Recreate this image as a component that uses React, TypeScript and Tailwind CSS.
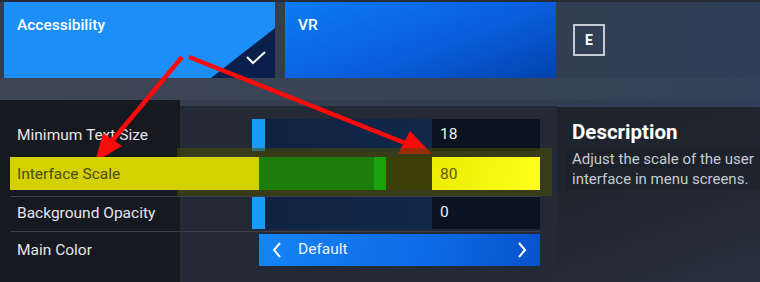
import React from "react";

const font = { fontFamily: "Roboto, 'Liberation Sans', sans-serif" };

function Slider({ value }: { value: string }) {
  return (
    <div className="flex h-full">
      <div className="relative w-[173px] h-full bg-[linear-gradient(90deg,#0f2242,#11284a)]">
        <div className="absolute left-[-7px] top-0 w-[13px] h-full bg-[#1a9bf6]" />
      </div>
      <div className="w-[108px] h-full bg-[#0b1221] flex items-center pl-[8px] text-[15.5px] text-[#eef0f2]">
        {value}
      </div>
    </div>
  );
}

function Row({ label, children }: { label: string; children: React.ReactNode }) {
  return (
    <div className="flex h-[32px] pl-[10px]">
      <div className="w-[249px] flex items-center pl-[7px] pt-[2px] text-[15.5px] text-[#e4e6ea]">{label}</div>
      {children}
    </div>
  );
}

function Arrows() {
  return (
    <svg className="absolute inset-0 pointer-events-none" width="760" height="282" viewBox="0 0 760 282">
      <line x1="182" y1="57" x2="112" y2="141" stroke="#ff0a0a" strokeWidth="4.5" />
      <polygon points="95,162 122,146 103,133" fill="#ff0a0a" />
      <line x1="189" y1="57" x2="405" y2="143" stroke="#ff0a0a" strokeWidth="4.5" />
      <polygon points="432,154 398,154 410,131" fill="#ff0a0a" />
    </svg>
  );
}

export default function App() {
  return (
    <div
      className="relative w-[760px] h-[282px] overflow-hidden bg-[linear-gradient(90deg,#363e4b,#333e52_70%,#30405a)]"
      style={font}
    >
      {/* top tabs */}
      <div className="h-[78px] flex pt-[2px] pl-[4px] border-t-2 border-[#252c37]">
        <div className="relative w-[271px] h-[76px] -mt-[2px] bg-[#1b8ef8] overflow-hidden">
          <div className="pt-[12px] pl-[13px] text-[15.5px] font-medium text-white">Accessibility</div>
          <svg className="absolute right-0 bottom-0" width="64" height="50" viewBox="0 0 64 50">
            <polygon points="64,0 64,50 0,50" fill="#0a1f4c" />
            <polyline points="36,29 42,35 54,24" fill="none" stroke="#ffffff" strokeWidth="2" />
          </svg>
        </div>
        <div className="ml-[10px] w-[271px] h-[76px] -mt-[2px] bg-[linear-gradient(160deg,#0c7bf4,#0a5ede_55%,#0243ad)]">
          <div className="pt-[12px] pl-[13px] text-[15.5px] font-medium text-white">VR</div>
        </div>
        <div className="ml-[17px] mt-[20px] w-[32px] h-[32px] border-2 border-[#c6cbd3] flex items-center justify-center text-[14px] font-bold text-white">
          E
        </div>
      </div>
      <div className="h-[22px] bg-[linear-gradient(90deg,#3c4553,#374358_75%,#35425b)]" />

      {/* bottom */}
      <div className="flex h-[182px]">
        <div className="w-[557px] pt-[19px] bg-[linear-gradient(to_right,#16191f_180px,transparent_180px),linear-gradient(to_bottom,transparent_6px,#232a36_6px)]">
          <Row label="Minimum Text Size">
            <Slider value="18" />
          </Row>

          <div className="relative z-10 -mt-[3px] h-[48px] pt-[9px] pl-[10px] bg-[linear-gradient(to_right,transparent_177px,rgba(72,74,0,0.55)_177px,rgba(72,74,0,0.55)_552px,transparent_552px)]">
            <div className="flex h-[33px]">
              <div className="w-[249px] flex items-center pl-[7px] pt-[2px] text-[15.5px] text-[#4d4c12] bg-[#d5d100]">
                Interface Scale
              </div>
              <div className="flex w-[173px] h-full">
                <div className="w-[115px] bg-[#1d7d0b]" />
                <div className="w-[12px] bg-[#16a40a]" />
                <div className="flex-1 bg-[#3b3f07]" />
              </div>
              <div className="w-[108px] flex items-center pl-[8px] pt-[2px] text-[15.5px] text-[#5b5a10] bg-[linear-gradient(100deg,#eceb00,#ffff1c)]">
                80
              </div>
            </div>
          </div>

          <div className="ml-[10px] w-[530px] h-px bg-[#3a4250]" />
          <Row label="Background Opacity">
            <Slider value="0" />
          </Row>
          <div className="mt-[2px] ml-[10px] w-[530px] h-px bg-[#3a4250]" />

          <div className="flex h-[32px] pl-[10px] mt-[2px]">
            <div className="w-[249px] flex items-center pl-[7px] pt-[2px] text-[15.5px] text-[#e4e6ea]">Main Color</div>
            <div className="w-[281px] h-full flex items-center bg-[linear-gradient(100deg,#1484f6,#0d6ae6_60%,#0752cc)] text-white">
              <svg width="12" height="18" viewBox="0 0 12 18" className="ml-[12px]">
                <polyline points="9,2 3,9 9,16" fill="none" stroke="#ffffff" strokeWidth="2" />
              </svg>
              <span className="ml-[15px] text-[15.5px] text-[#eef2f8]">Default</span>
              <svg width="12" height="18" viewBox="0 0 12 18" className="ml-auto mr-[12px]">
                <polyline points="3,2 9,9 3,16" fill="none" stroke="#ffffff" strokeWidth="2" />
              </svg>
            </div>
          </div>
        </div>

        <div className="flex-1 mt-[7px] pl-[15px] pt-[12px] bg-[linear-gradient(160deg,#1d222b,#222833_60%,#2a3240)]">
          <div className="text-[20.5px] font-bold text-white leading-[26px]">Description</div>
          <div className="mt-[3px] -ml-[6px] pl-[6px] py-[1px] bg-[#1b2028]/60 text-[15px] leading-[20px] text-[#c7cbd1] whitespace-nowrap">
            Adjust the scale of the user
            <br />
            interface in menu screens.
          </div>
        </div>
      </div>

      <Arrows />
    </div>
  );
}
